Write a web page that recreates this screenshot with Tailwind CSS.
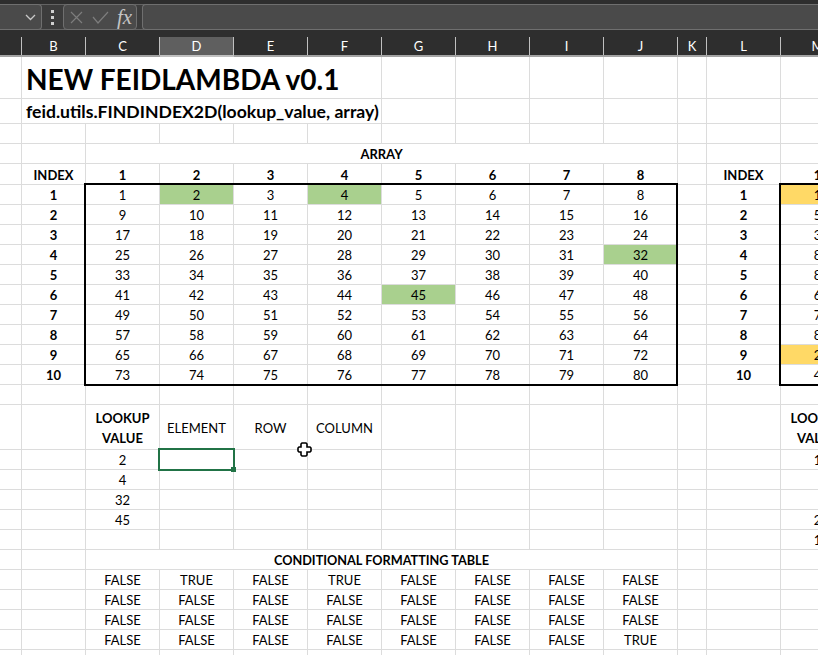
<!DOCTYPE html>
<html lang="en">
<head>
    <meta charset="UTF-8">
    <title>NEW FEIDLAMBDA v0.1</title>
    <script src="https://cdn.jsdelivr.net/npm/@tailwindcss/browser@4"></script>
</head>
<body class="bg-white">
    <div class="relative w-[818px] h-[655px] overflow-hidden font-['Lato','Liberation_Sans',sans-serif] text-[13px] text-black">

        <!-- Formula bar -->
        <div class="h-[37px] bg-[#2e2e2e] pt-[4px]">
            <div class="flex items-center h-[26px] bg-[#3c3c3c] border-y border-[#8a8a8a]/50">
                <div class="flex items-center justify-end w-[42px] h-[26px] pr-[5px] bg-[#4a4a4a] border border-l-0 border-[#6f6f6f] rounded-r-[4px]">
                    <svg width="11" height="7" viewBox="0 0 11 7" fill="none" stroke="#c8c8c8" stroke-width="1.3"><path d="M1 1l4.5 4.5L10 1"/></svg>
                </div>
                <div class="flex flex-col gap-[3px] ml-[9px] w-[3px]">
                    <span class="w-[3px] h-[3px] bg-[#d0d0d0]"></span>
                    <span class="w-[3px] h-[3px] bg-[#d0d0d0]"></span>
                    <span class="w-[3px] h-[3px] bg-[#d0d0d0]"></span>
                </div>
                <div class="flex items-center w-[74px] h-[26px] ml-[9px] pl-[6px] bg-[#4a4a4a] border border-[#6f6f6f] rounded-[4px]">
                    <svg width="13" height="13" viewBox="0 0 13 13" fill="none" stroke="#7d7d7d" stroke-width="1.2"><path d="M1 1l11 11M12 1L1 12"/></svg>
                    <svg class="ml-[9px]" width="17" height="13" viewBox="0 0 17 13" fill="none" stroke="#7d7d7d" stroke-width="1.2"><path d="M1 6l5 6L16 1"/></svg>
                    <span class="ml-[8px] font-['Liberation_Serif',serif] italic text-[21px] leading-none text-[#c4c4c4]">fx</span>
                </div>
                <div class="flex-1 h-[26px] ml-[5px] bg-[#4a4a4a] border border-r-0 border-[#6f6f6f] rounded-l-[4px]"></div>
            </div>
        </div>

        <!-- Column headers -->
        <div id="col-headers" class="flex h-[20px] bg-[#2e2e2e] border-b-2 border-[#a3a3a3] text-white text-[13px]"></div>

        <!-- Sheet -->
        <div id="sheet"></div>

        <!-- Table outlines -->
        <div class="absolute left-[84px] top-[183px] w-[594px] h-[203px] border-2 border-black pointer-events-none"></div>
        <div class="absolute left-[779px] top-[183px] w-[60px] h-[203px] border-2 border-black pointer-events-none"></div>

        <!-- Selected cell -->
        <div class="absolute left-[158px] top-[448px] w-[77px] h-[23px] border-2 border-[#217346]"></div>
        <div class="absolute left-[231px] top-[467px] w-[5px] h-[5px] bg-[#217346]"></div>

        <!-- Mouse cursor -->
        <svg class="absolute left-[297px] top-[442px]" width="15" height="15" viewBox="0 0 15 15">
            <path d="M5 1h4l1 1v3h3l1 1v3l-1 1h-3v3l-1 1H5l-1-1v-3H2L1 9V6l1-1h2V2z" fill="white" stroke="black" stroke-width="1.6"/>
        </svg>
    </div>

    <script>
        const widths = ["w-[22px]", "w-[64px]", "w-[74px]", "w-[74px]", "w-[74px]", "w-[74px]", "w-[74px]", "w-[74px]", "w-[74px]", "w-[74px]", "w-[29px]", "w-[74px]", "w-[74px]"];
        const letters = ["", "B", "C", "D", "E", "F", "G", "H", "I", "J", "K", "L", "M"];
        const greens = ["1-2", "1-4", "4-8", "6-5"];
        const yellows = [1, 9];
        const rightCol = [1, 5, 3, 8, 8, 6, 7, 8, 2, 4];

        // column header strip
        document.getElementById("col-headers").innerHTML = letters.map((letter, i) => {
            const active = letter === "D" ? "bg-[#5f5f5f] border-b-2 border-[#217346] h-[20px]" : "";
            return `<div class="flex items-center justify-center shrink-0 pt-[2px] border-r border-[#c0c0c0] ${widths[i]} ${active}">${letter}</div>`;
        }).join("");

        function cell(col, content = {}) {
            const border = content.noRight ? "" : "border-r border-[#dcdcdc]";
            const weight = content.bold ? "font-bold" : "";
            const fill = content.fill || "";
            return `<div class="flex items-center justify-center shrink-0 whitespace-nowrap pt-[3px] ${widths[col]} ${border} ${weight} ${fill}">${content.text ?? ""}</div>`;
        }

        function row(height, contents = {}) {
            let cells = "";
            for (let c = 0; c < widths.length; c++) cells += cell(c, contents[c]);
            return `<div class="flex ${height} border-b border-[#dcdcdc]">${cells}</div>`;
        }

        // row with a merged block of cells from `from` to `to`
        function mergedRow(height, from, to, html, wrapClass) {
            let cells = "";
            for (let c = 0; c < widths.length; c++) {
                if (c === from) {
                    cells += `<div class="shrink-0 border-r border-[#dcdcdc] ${wrapClass}">${html}</div>`;
                    c = to;
                } else {
                    cells += cell(c);
                }
            }
            return `<div class="flex ${height} border-b border-[#dcdcdc]">${cells}</div>`;
        }

        let html = "";
        html += mergedRow("h-[42px]", 1, 5, "NEW FEIDLAMBDA v0.1", "w-[360px] pl-[4px] pt-[2px] flex items-center font-bold text-[28px] whitespace-nowrap");
        html += mergedRow("h-[25px]", 1, 5, "feid.utils.FINDINDEX2D(lookup_value, array)", "w-[360px] pl-[4px] pt-[2px] flex items-center font-bold text-[17.6px] whitespace-nowrap");
        html += row("h-[20px]");
        html += mergedRow("h-[20px]", 2, 9, "ARRAY", "w-[592px] pt-[2px] flex items-center justify-center font-bold text-[13px]");

        // header row of both tables
        const header = { 1: { text: "INDEX", bold: true }, 11: { text: "INDEX", bold: true }, 12: { text: "1", bold: true } };
        for (let j = 1; j <= 8; j++) header[j + 1] = { text: j, bold: true };
        html += row("h-[21px]", header);

        // array rows
        for (let i = 1; i <= 10; i++) {
            const contents = { 1: { text: i, bold: true }, 11: { text: i, bold: true } };
            for (let j = 1; j <= 8; j++) {
                contents[j + 1] = {
                    text: (i - 1) * 8 + j,
                    fill: greens.includes(`${i}-${j}`) ? "bg-[#a9d08e]" : ""
                };
            }
            contents[12] = { text: rightCol[i - 1], fill: yellows.includes(i) ? "bg-[#ffd966]" : "" };
            html += row("h-[20px]", contents);
        }

        html += row("h-[20px]");

        // lookup header
        const lookup = "LOOKUP<br>VALUE";
        html += row("h-[45px]", {
            2: { text: `<span class="-mt-[2px] text-center leading-[20px]">${lookup}</span>`, bold: true },
            3: { text: "ELEMENT" },
            4: { text: "ROW" },
            5: { text: "COLUMN" },
            12: { text: `<span class="-mt-[2px] text-center leading-[20px]">${lookup}</span>`, bold: true }
        });

        // lookup values
        const lookups = [[2, 1], [4, ""], [32, ""], [45, 2], ["", 1]];
        lookups.forEach(([left, right]) => {
            html += row("h-[20px]", { 2: { text: left }, 12: { text: right } });
        });

        html += mergedRow("h-[20px]", 2, 9, "CONDITIONAL FORMATTING TABLE", "w-[592px] pt-[2px] flex items-center justify-center font-bold text-[12.7px]");

        // conditional formatting table
        for (let i = 1; i <= 5; i++) {
            const contents = {};
            if (i < 5) {
                for (let j = 1; j <= 8; j++) {
                    contents[j + 1] = { text: greens.includes(`${i}-${j}`) ? "TRUE" : "FALSE" };
                }
            }
            html += row("h-[20px]", contents);
        }

        document.getElementById("sheet").innerHTML = html;
    </script>
</body>
</html>
